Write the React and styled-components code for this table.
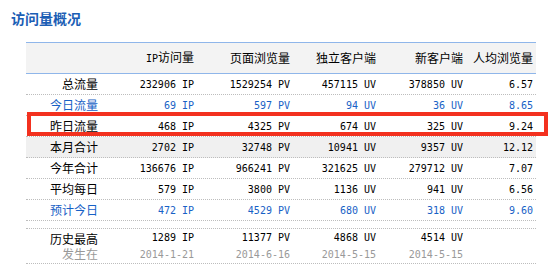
import React from "react";
import styled, { createGlobalStyle } from "styled-components";

const Global = createGlobalStyle`
  html, body { margin: 0; padding: 0; background: #fff; }
  body { font-family: "Noto Sans CJK SC", "Liberation Sans", sans-serif; }
`;

const Page = styled.div`
  width: 558px;
  height: 274px;
  overflow: hidden;
  box-sizing: border-box;
  padding-top: 8px;
`;

const Title = styled.h2`
  margin: 0 0 14px 11px;
  font-size: 14px;
  line-height: 20px;
  height: 20px;
  font-weight: 700;
  color: #1b5eb5;
  font-family: "Noto Sans CJK SC", sans-serif;
`;

const Table = styled.div`
  margin-left: 26px;
  width: 510px;
  border-top: 1px solid #8fb6ea;
`;

const cols = "75px 96px 96px 86px 87px 70px";

const HeaderRow = styled.div`
  display: grid;
  grid-template-columns: ${cols};
  height: 30px;
  background: #f3f3f3;
  border-bottom: 1px solid #8fb6ea;
  align-items: center;
`;

const Row = styled.div`
  position: relative;
  display: grid;
  grid-template-columns: ${cols};
  height: ${(p) => p.$h || 20}px;
  align-items: center;
  background: ${(p) => (p.$shade ? "#f0f0f0" : "transparent")};
  border-bottom: 1px dotted #bdbdbd;
  color: ${(p) => (p.$tone === "blue" ? "#1761c6" : "#000")};
`;

const Cell = styled.div`
  text-align: right;
  padding-right: 3px;
  font-size: 12px;
  line-height: 14px;
  white-space: nowrap;
`;

const Mono = styled.span`
  font-family: "DejaVu Sans Mono", monospace;
  font-size: 10px;
  white-space: pre;
`;

const Stack = styled.div`
  display: flex;
  flex-direction: column;
  align-items: flex-end;
  padding-right: 3px;
  font-size: 12px;
  line-height: 15px;
  white-space: nowrap;
`;

const Sub = styled.span`
  color: #999;
`;

const Highlight = styled.div`
  position: absolute;
  left: 1px;
  right: -12px;
  top: -4px;
  bottom: 0px;
  border: 4px solid #f3311f;
  pointer-events: none;
`;

const headers = [
  "",
  <><Mono>IP</Mono>访问量</>,
  "页面浏览量",
  "独立客户端",
  "新客户端",
  "人均浏览量",
];

const rows = [
  { label: "总流量", v: ["232906 IP", "1529254 PV", "457115 UV", "378850 UV", "6.57"] },
  { label: "今日流量", tone: "blue", v: ["69 IP", "597 PV", "94 UV", "36 UV", "8.65"] },
  { label: "昨日流量", mark: true, v: ["468 IP", "4325 PV", "674 UV", "325 UV", "9.24"] },
  { label: "本月合计", shade: true, v: ["2702 IP", "32748 PV", "10941 UV", "9357 UV", "12.12"] },
  { label: "今年合计", v: ["136676 IP", "966241 PV", "321625 UV", "279712 UV", "7.07"] },
  { label: "平均每日", v: ["579 IP", "3800 PV", "1136 UV", "941 UV", "6.56"] },
  { label: "预计今日", tone: "blue", v: ["472 IP", "4529 PV", "680 UV", "318 UV", "9.60"] },
];

const record = {
  v: ["1289 IP", "11377 PV", "4868 UV", "4514 UV", ""],
  d: ["2014-1-21", "2014-6-16", "2014-5-15", "2014-5-15", ""],
};

export default function App() {
  return (
    <Page>
      <Global />
      <Title>访问量概况</Title>
      <Table>
        <HeaderRow>
          {headers.map((h, i) => (
            <Cell key={i}>{h}</Cell>
          ))}
        </HeaderRow>
        {rows.map((r) => (
          <Row key={r.label} $tone={r.tone} $shade={r.shade}>
            <Cell>{r.label}</Cell>
            {r.v.map((x, i) => (
              <Cell key={i}>
                <Mono>{x}</Mono>
              </Cell>
            ))}
            {r.mark && <Highlight />}
          </Row>
        ))}
        <Row $h={7} />
        <Row $h={34}>
          <Stack>
            <span>历史最高</span>
            <Sub>发生在</Sub>
          </Stack>
          {record.v.map((x, i) => (
            <Stack key={i}>
              <Mono>{x || " "}</Mono>
              <Sub>
                <Mono>{record.d[i] || " "}</Mono>
              </Sub>
            </Stack>
          ))}
        </Row>
      </Table>
    </Page>
  );
}
